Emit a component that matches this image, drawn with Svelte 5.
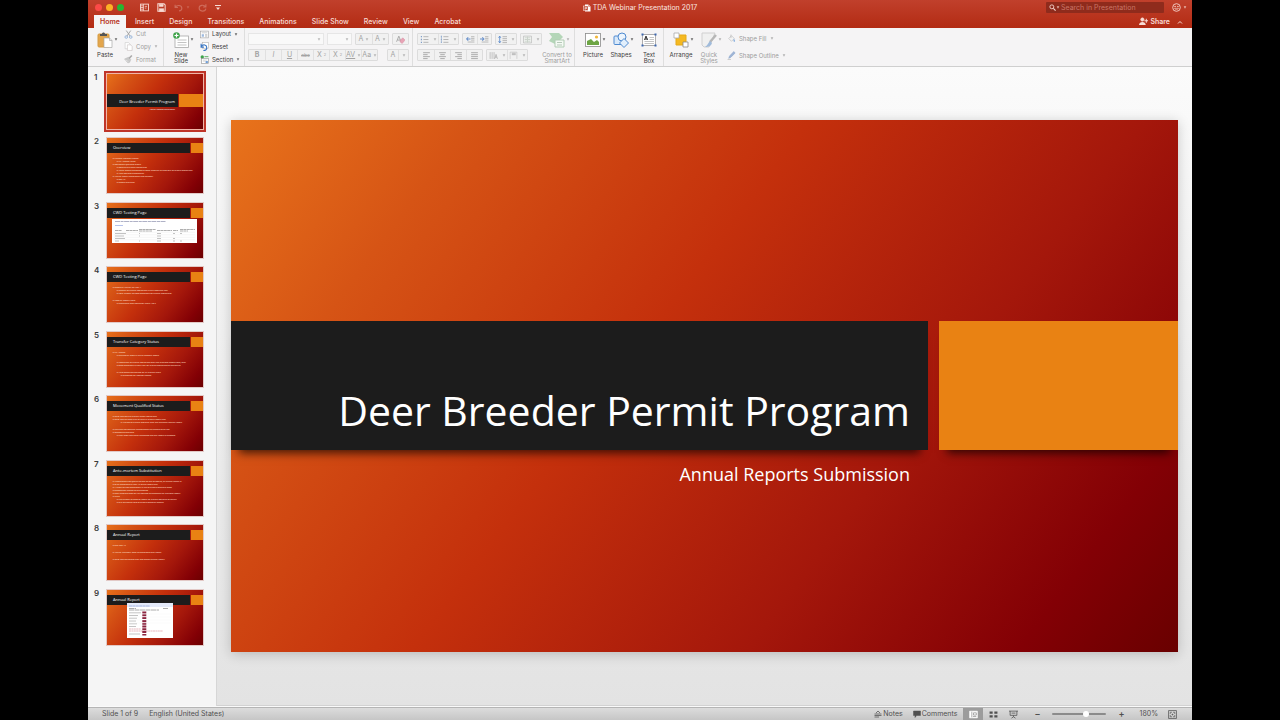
<script lang="ts">
    type Line = { text: string; level?: number; space?: boolean };
    type Thumb = { title: string; lines?: Line[]; picture?: string };

    const tabs = ["Home", "Insert", "Design", "Transitions", "Animations", "Slide Show", "Review", "View", "Acrobat"];

    const slides: Thumb[] = [
        { title: "Deer Breeder Permit Program" },
        {
            title: "Overview",
            lines: [
                { text: "Transfer Category Status" },
                { text: "TC 1 Status Herds", level: 1 },
                { text: "Movement Qualified Status" },
                { text: "Months of eligible mortalities", level: 1 },
                { text: "Antler testing submitted to meet report of at least 80% of eligible mortalities", level: 1 },
                { text: "Ante-mortem Substitution", level: 1 },
                { text: "Annual Report Submission and Renewal" },
                { text: "May 15", level: 1 },
                { text: "Report Overview", level: 1 }
            ]
        },
        { title: "CWD Testing Page", picture: "table" },
        {
            title: "CWD Testing Page",
            lines: [
                { text: "Report by Facility for Year 1" },
                { text: "Number of eligible mortalities in the reporting year", level: 1 },
                { text: "Total number of tests submitted for eligible mortalities", level: 1 },
                { text: "Tests by Report Years", space: true },
                { text: "Cumulative test results for years 1 to 5", level: 1 }
            ]
        },
        {
            title: "Transfer Category Status",
            lines: [
                { text: "TC 1 Status" },
                { text: "Certified or tests in lieu of category status", level: 1 },
                { text: "Tested 80% of eligible mortalities over five previous report years, with", level: 1, space: true },
                { text: "tests submitted in each year for eligible mortalities of the facility", level: 1 },
                { text: "Herd status maintained for all eligible years", level: 1, space: true },
                { text: "Submitted for category status", level: 2 }
            ]
        },
        {
            title: "Movement Qualified Status",
            lines: [
                { text: "Must have 80% of eligible report mortalities" },
                { text: "Must have at least 3.6% of herd in eligible report year" },
                { text: "Average of eligible mortality over the previous years of report", level: 2 },
                { text: "Facilities not meeting a substitution are subject to be not", space: true },
                { text: "movement qualified" },
                { text: "Until tests have been submitted and the report is accepted", level: 1 }
            ]
        },
        {
            title: "Ante-mortem Substitution",
            lines: [
                { text: "If movement Not Qualifying due to lack of testing, an annual report is" },
                { text: "to be submitted by May 15 of the report year" },
                { text: "A report or test submission in lieu of eligible mortality tests" },
                { text: "substitution results to be accepted" },
                { text: "New reported tests will be counted as substitute for previous report" },
                { text: "years" },
                { text: "The number of tests to report for eligible mortality of facility", level: 1 },
                { text: "at a minimum ratio of eligible mortality testing", level: 1 }
            ]
        },
        {
            title: "Annual Report",
            lines: [
                { text: "Due May 15" },
                { text: "Annual inventory must be submitted with report", space: true },
                { text: "Must have permittee sign and submit annual report", space: true }
            ]
        },
        { title: "Annual Report", picture: "form" }
    ];

    let current = $state(0);
    let zoom = $state(64);
</script>

{#snippet caret()}
    <svg class="caret" viewBox="0 0 6 4" aria-hidden="true"><path d="M1 0h4L3 4z" fill="currentColor" /></svg>
{/snippet}

{#snippet icon(name: string)}
    <svg class="icon" viewBox="0 0 16 16" fill="none" stroke="currentColor" aria-hidden="true">
        {#if name === "sidebar"}
            <rect x="1" y="2" width="14" height="12" stroke-width="1.600" /><path d="M6 2v12M1 5h5M1 8h5M1 11h5" stroke-width="1.400" /><path d="M8.500 6h4M8.500 9h3" stroke-width="1.200" />
        {:else if name === "save"}
            <path d="M1.500 1.500h11l2 2v11h-13z" stroke-width="1.800" /><path d="M4 2h7v4H4zM4 10h8v5H4z" fill="currentColor" />
        {:else if name === "undo"}
            <path d="M2 3v5h5M2 8c3-5 11-5 12 1 0 3-2 5-5 5" stroke-width="2" />
        {:else if name === "redo"}
            <path d="M14 2v5H9M13.500 7C10 2 2 4 2 9c0 7 11 7 12 1" stroke-width="2" />
        {:else if name === "doc"}
            <path d="M4 1h7l4 4v10H4z" fill="#fff" stroke="none" /><path d="M11 1v4h4" stroke="#b9402a" /><rect x="1" y="4" width="9" height="9" fill="#b8351f" stroke="#fff" /><path d="M4 11.500V6.500h3v3H4" stroke="#fff" stroke-width="1.300" />
        {:else if name === "search"}
            <circle cx="6.500" cy="6.500" r="4.500" stroke-width="2" /><path d="M10 10l5 5" stroke-width="2.400" />
        {:else if name === "smile"}
            <circle cx="8" cy="8" r="6.800" stroke-width="1.500" /><circle cx="5.500" cy="6.300" r=".8" fill="currentColor" /><circle cx="10.500" cy="6.300" r=".8" fill="currentColor" /><path d="M4.500 9.500c1.500 3 5.500 3 7 0z" />
        {:else if name === "share"}
            <circle cx="6" cy="4.500" r="3" fill="currentColor" /><path d="M0 14c0-7 12-7 12 0z" fill="currentColor" stroke="none" /><path d="M13 3v7M9.500 6.500h6.500" stroke-width="1.800" />
        {:else if name === "paste"}
            <rect x="1" y="2" width="11" height="13" rx="1" fill="#e3a64d" stroke="#d69b43" /><path d="M3 4V2h2c0-2 3-2 3 0h2v2z" fill="#555" stroke="none" /><path d="M7 6h5.500L15 8.500V15.500H7z" fill="#fff" stroke="#aaa" stroke-width=".7" /><path d="M12.500 6v2.500H15" stroke="#aaa" stroke-width=".7" />
        {:else if name === "cut"}
            <path d="M4 1l7 10M12 1L5 11" stroke="#999" stroke-width="1.500" /><circle cx="4" cy="12.500" r="2.300" stroke="#8fb0d8" stroke-width="1.500" /><circle cx="12" cy="12.500" r="2.300" stroke="#8fb0d8" stroke-width="1.500" />
        {:else if name === "copy"}
            <path d="M2 1h6l3 3v8H2z" fill="#fff" stroke="#c4c4c4" /><path d="M6 5h6l2.500 3v7H6z" fill="#fff" stroke="#c4bcbc" />
        {:else if name === "format"}
            <path d="M1 7l6 7 3-1 2-5-4-4z" fill="#c9c9c9" stroke="#bbb" /><path d="M9 6l5-5" stroke="#a8a8a8" stroke-width="2.600" /><path d="M3 9l5 3" stroke="#eee" />
        {:else if name === "newslide"}
            <rect x="2" y="4" width="13.500" height="11.500" fill="#fff" stroke="#a8a8a8" stroke-width=".8" /><path d="M4.500 8h9M4.500 10.500h9M4.500 13h9" stroke="#b4b4b4" stroke-width=".8" /><circle cx="3.500" cy="3.500" r="3.300" fill="#3fa34a" stroke="none" /><path d="M3.500 1.500v4M1.500 3.500h4" stroke="#fff" stroke-width="1.200" />
        {:else if name === "layout"}
            <rect x="1" y="2" width="14" height="12" fill="#fff" stroke="#9a9a9a" /><path d="M3 5h10M9 8h4M9 10h4M9 12h4" stroke="#aaa" /><path d="M3 7.500h4v4.500H3z" fill="#9db9de" stroke="none" />
        {:else if name === "reset"}
            <rect x="4" y="1" width="11" height="10" fill="#fff" stroke="#aaa" /><path d="M2 3v6h5M2 8c4-5 10-3 10 2 0 3-2 5-6 5" stroke="#3875c4" stroke-width="2" />
        {:else if name === "section"}
            <circle cx="4" cy="3.500" r="3" fill="#3fa34a" stroke="none" /><path d="M8 3h7" stroke="#3fa34a" stroke-width="1.500" /><rect x="3" y="6.500" width="12" height="8.500" fill="#fff" stroke="#8a8a8a" /><path d="M5 9h8M5 11h5" stroke="#bbb" /><path d="M10 11h4v3h-4z" fill="#5a8fd0" stroke="none" />
        {:else if name === "clear"}
            <path d="M1 12L5 2l4 10M3 9h5" stroke="#999" stroke-width="1.400" /><path d="M8 9l4-4 4 4-5 6-4-3z" fill="#e8a3b5" stroke="#d893a6" />
        {:else if name === "bullets" || name === "numbers"}
            <path d="M6 3h9M6 8h9M6 13h9" stroke="#a0a0a0" stroke-width="1.300" /><path d="M1.500 3h2M1.500 8h2M1.500 13h2" stroke="#7d9cc7" stroke-width={name === "bullets" ? 2.4 : 1.2} />{#if name === "numbers"}<path d="M2.500 1v13" stroke="#7d9cc7" />{/if}
        {:else if name === "outdent" || name === "indent"}
            <path d="M9 3h6M9 6h6M9 9h6M3 12.500h12" stroke="#a0a0a0" stroke-width="1.200" /><path d={name === "outdent" ? "M8 7H1M4 4L1 7l3 3" : "M0 7h7M4 4l3 3-3 3"} stroke="#6b92cb" stroke-width="1.800" />
        {:else if name === "spacing"}
            <path d="M8 3h8M8 6.500h8M8 10h8M8 13.500h8" stroke="#a0a0a0" stroke-width="1.300" /><path d="M3 2v12M1 5l2-3 2 3M1 11l2 3 2-3" stroke="#5d8bcd" stroke-width="1.500" />
        {:else if name === "columns"}
            <path d="M1 2h14v12H1z" fill="#f5f7f5" stroke="#aaa" /><path d="M3 5h4M3 8h4M3 11h4M9 5h4M9 8h4M9 11h4M8 3v10" stroke="#a9b5aa" />
        {:else if name === "left" || name === "center" || name === "right" || name === "justify"}
            <path d={name === "left" ? "M2 3h12M2 6.500h8M2 10h12M2 13.500h8" : name === "center" ? "M2 3h12M4 6.500h8M2 10h12M4 13.500h8" : name === "right" ? "M2 3h12M6 6.500h8M2 10h12M6 13.500h8" : "M2 3h12M2 6.500h12M2 10h12M2 13.500h12"} stroke="#999" stroke-width="1.400" />
        {:else if name === "direction"}
            <path d="M2 2v12M5.500 2v12M9 2v12" stroke="#aaa" stroke-width="1.200" /><path d="M10 14l2.500-8 2.500 8M11 11h3" stroke="#999" />
        {:else if name === "valign"}
            <path d="M2 14V2h12v12" stroke="#bbb" /><path d="M5 4h7M5 6.500h7" stroke="#999" stroke-width="1.200" />
        {:else if name === "smartart"}
            <path d="M0 1h10l4 4-4 4H6v3L0 9l3-4z" fill="#b4d6b8" stroke="none" /><path d="M6 8h9v7H6z" fill="#f4faf4" stroke="#b2cdb5" /><path d="M8 10.500h5M8 13h5" stroke="#b6c8b8" />
        {:else if name === "picture"}
            <rect x=".5" y="1.500" width="15" height="13" fill="#fff" stroke="#8b8b8b" stroke-width=".8" /><path d="M2 13V9l4-2 3 3 3-2 2 2v3z" fill="#6da544" stroke="none" /><circle cx="11.500" cy="5" r="1.600" fill="#f2b83a" stroke="none" />
        {:else if name === "shapes"}
            <rect x="1" y="4" width="8.500" height="8.500" rx="1" fill="#d9e9fa" stroke="#4f8ad0" /><circle cx="9" cy="5" r="4" fill="#edf5fd" stroke="#4f8ad0" /><path d="M11 6.500l4.500 4.500-4.500 4.500L6.500 11z" fill="#e2effc" stroke="#4f8ad0" />
        {:else if name === "textbox"}
            <path d="M1.500 2.500h13v11h-13z" fill="#fff" stroke="#8c8c8c" stroke-width=".7" /><path d="M3.500 8L5 4l1.500 4M4 7h2.500" stroke="#333" /><path d="M8.500 5.500h4.500M8.500 7.500h4.500M3.500 9.500h9.500M3.500 11.500h9.500" stroke="#aaa" stroke-width=".7" /><path d="M.5 1.500h2v2h-2zM13.500 1.500h2v2h-2zM.5 12.500h2v2h-2zM13.500 12.500h2v2h-2z" fill="#3e68b0" stroke="none" />
        {:else if name === "arrange"}
            <path d="M3 3h10v10H3z" fill="#f5b921" stroke="#e5a919" /><path d="M1 1h5v5H1z" fill="#fff" stroke="#aaa" stroke-width=".8" /><path d="M10 10h5v5h-5z" fill="#fff" stroke="#888" stroke-width=".8" />
        {:else if name === "styles"}
            <path d="M1 1h13L8 15H3l-2-2z" fill="#f0f0f0" stroke="#d0d0d0" /><path d="M15 3L9 10" stroke="#b6b6b6" stroke-width="2.400" /><path d="M9 9l2 2c-1 3-3 4-7 4 3-2 3-4 5-6z" fill="#9fbadb" stroke="none" />
        {:else if name === "fill"}
            <path d="M3 8l5-5 5 5-5 5z" fill="#f3f3f3" stroke="#b5b5b5" /><path d="M7 1v6" stroke="#aaa" /><path d="M12 8c3 3 3 6 1 6s-2-3-1-6z" fill="#8fb3df" stroke="none" />
        {:else if name === "outline"}
            <path d="M3 13l1.500-4L12 1l2.500 2.500L7 11z" fill="#9fb5d6" stroke="#8ba5cb" /><path d="M1 15h6" stroke="#aaa" />
        {:else if name === "notes"}
            <path d="M4 6l4-4 4 4M1 8h14M1 11h14M1 14h9" stroke-width="1.500" />
        {:else if name === "comments"}
            <path d="M1 2h14v9H7l-3 4v-4H1z" fill="currentColor" />
        {:else if name === "normal"}
            <path d="M1 2h14v12H1z" fill="#fff" stroke="#fff" /><path d="M5 3v10M8 5h5v4H8zM7 11.500h6" stroke="#888" stroke-width="1.200" />
        {:else if name === "sorter"}
            <path d="M1 2.500h5.500v4H1zM9.500 2.500H15v4H9.500zM1 9.500h5.500v4H1zM9.500 9.500H15v4H9.500z" fill="currentColor" stroke="none" />
        {:else if name === "show"}
            <path d="M0 2h16M2 2v7.500h12V2M4.500 5.500h7M8 9.500V12M4.500 14.500L8 12l3.500 2.500" stroke-width="1.400" />
        {:else if name === "fit"}
            <path d="M1 1h14v14H1z" stroke-width="1.300" /><path d="M4 7V4h3M9 4h3v3M12 9v3H9M7 12H4V9M6.500 8h3M8 6.500v3" stroke-width="1.200" />
        {/if}
    </svg>
{/snippet}

{#snippet big(name: string, first: string, second: string, arrow: boolean, off: boolean)}
    <button class="big" class:off>
        <span class="big-icon">{@render icon(name)}</span>
        {#if arrow}{@render caret()}{/if}
        <span class="label">{first}{#if second}<br />{second}{/if}</span>
    </button>
{/snippet}

{#snippet small(name: string, text: string, arrow: boolean, off: boolean)}
    <button class="small" class:off>{@render icon(name)}<span>{text}</span>{#if arrow}{@render caret()}{/if}</button>
{/snippet}

{#snippet tool(name: string, arrow: boolean)}
    <button class="tool" class:arrow aria-label={name}>{@render icon(name)}{#if arrow}{@render caret()}{/if}</button>
{/snippet}

<div class="window">
    <header>
        <div class="titlebar">
            <div class="quick">
                <div class="lights">
                    <button class="light close" aria-label="Close"></button>
                    <button class="light minimize" aria-label="Minimize"></button>
                    <button class="light expand" aria-label="Expand"></button>
                </div>
                <button aria-label="Slides">{@render icon("sidebar")}</button>
                <button aria-label="Save">{@render icon("save")}</button>
                <button class="dim" aria-label="Undo">{@render icon("undo")}{@render caret()}</button>
                <button class="dim" aria-label="Redo">{@render icon("redo")}</button>
                <button aria-label="Customize toolbar">
                    <svg class="more" viewBox="0 0 6 6" aria-hidden="true"><path d="M0 0h6v1H0zM1 2.500h4L3 5z" fill="currentColor" /></svg>
                </button>
            </div>
            <div class="title">{@render icon("doc")}<span>TDA Webinar Presentation 2017</span></div>
            <div class="find">
                <label class="search">
                    {@render icon("search")}{@render caret()}
                    <input type="search" placeholder="Search in Presentation" aria-label="Search in Presentation" />
                </label>
                <button class="feedback" aria-label="Feedback">{@render icon("smile")}{@render caret()}</button>
            </div>
        </div>
        <nav class="tabs">
            {#each tabs as tab, i}
                <button class="tab" class:active={i === 0}>{tab}</button>
            {/each}
            <button class="share">{@render icon("share")}Share</button>
            <button class="collapse" aria-label="Collapse ribbon">
                <svg viewBox="0 0 6 4" fill="none" stroke="currentColor"><path d="M1 3.500l2-2 2 2" /></svg>
            </button>
        </nav>
    </header>

    <div class="ribbon">
        <section class="group clipboard">
            {@render big("paste", "Paste", "", true, false)}
            <div class="stack">
                {@render small("cut", "Cut", false, true)}
                {@render small("copy", "Copy", true, true)}
                {@render small("format", "Format", false, true)}
            </div>
        </section>
        <section class="group slide-tools">
            {@render big("newslide", "New", "Slide", true, false)}
            <div class="stack">
                {@render small("layout", "Layout", true, false)}
                {@render small("reset", "Reset", false, false)}
                {@render small("section", "Section", true, false)}
            </div>
        </section>
        <section class="group fonts">
            <div class="rows">
                <div class="row">
                    <div class="combo family"><select aria-label="Font"><option></option></select>{@render caret()}</div>
                    <div class="combo size"><select aria-label="Font size"><option></option></select>{@render caret()}</div>
                    <div class="bar"><button class="tool grow">A{@render caret()}</button><button class="tool grow">A{@render caret()}</button></div>
                    <div class="bar">{@render tool("clear", false)}</div>
                </div>
                <div class="row">
                    <div class="bar wide">
                        <button class="tool"><b>B</b></button>
                        <button class="tool"><i>I</i></button>
                        <button class="tool"><u>U</u></button>
                        <button class="tool strike"><s>abc</s></button>
                        <button class="tool">X<sup>2</sup></button>
                        <button class="tool">X<sub>2</sub></button>
                        <button class="tool"><u>AV</u>{@render caret()}</button>
                        <button class="tool">Aa{@render caret()}</button>
                    </div>
                    <div class="bar color"><button class="tool">A</button><button class="tool" aria-label="Font color">{@render caret()}</button></div>
                </div>
            </div>
        </section>
        <section class="group paragraph">
            <div class="rows">
                <div class="row">
                    <div class="bar">{@render tool("bullets", true)}{@render tool("numbers", true)}</div>
                    <div class="bar">{@render tool("outdent", false)}{@render tool("indent", false)}</div>
                    <div class="bar">{@render tool("spacing", true)}</div>
                    <div class="bar">{@render tool("columns", true)}</div>
                </div>
                <div class="row">
                    <div class="bar aligns">{@render tool("left", false)}{@render tool("center", false)}{@render tool("right", false)}{@render tool("justify", false)}</div>
                    <div class="bar">{@render tool("direction", true)}{@render tool("valign", true)}</div>
                </div>
            </div>
            {@render big("smartart", "Convert to", "SmartArt", true, true)}
        </section>
        <section class="group insert">
            {@render big("picture", "Picture", "", true, false)}
            {@render big("shapes", "Shapes", "", true, false)}
            {@render big("textbox", "Text", "Box", false, false)}
        </section>
        <section class="group drawing">
            {@render big("arrange", "Arrange", "", true, false)}
            {@render big("styles", "Quick", "Styles", true, true)}
            <div class="stack two">
                {@render small("fill", "Shape Fill", true, true)}
                {@render small("outline", "Shape Outline", true, true)}
            </div>
        </section>
    </div>

    <main>
        <ol class="pane">
            {#each slides as slide, i}
                <li>
                    <span class="number">{i + 1}</span>
                    <button class="thumb" class:selected={i === current} class:cover={i === 0} onclick={() => (current = i)}>
                        <span class="thumb-title">{slide.title}</span>
                        <span class="thumb-accent"></span>
                        {#if i === 0}
                            <span class="thumb-sub">Annual Reports Submission</span>
                        {/if}
                        {#if slide.lines}
                            <span class="thumb-body">
                                {#each slide.lines as line}
                                    <span class="line level{line.level ?? 0}" class:space={line.space}>▸ {line.text}</span>
                                {/each}
                            </span>
                        {/if}
                        {#if slide.picture === "table"}
                            <svg class="shot table" viewBox="0 0 85 24" aria-hidden="true">
                                <path fill="#fff" d="M0 0h85v24H0z" />
                                <path d="M3 2.500h51" stroke="#9a9db8" stroke-width=".8" stroke-dasharray="5 .6 3 .5" />
                                <path d="M3 6.500h8" stroke="#a3b3e6" stroke-width=".8" />
                                <path d="M3 11.500h7M14 11.500h12M27 10.500h17M27 12h13M45 11.500h15M61 11.500h5M68 10.500h15M68 12h8" stroke="#8c8c8c" stroke-width=".7" stroke-dasharray="3 .4" />
                                <path d="M3 14.500h11M3 17h9M3 19.500h10M3 22h4M27 14.500h1M27 17h1M27 22h1M45 14.500h4M45 17h4M45 19.500h4M45 22h4M61 14.500h2M61 19.500h2M61 22h2M68 14.500h2M68 22h2" stroke="#a8a8a8" stroke-width=".7" />
                                <path d="M2 13.200h81M2 15.800h81M2 18.300h81M2 20.800h81" stroke="#ddd" stroke-width=".3" />
                            </svg>
                        {/if}
                        {#if slide.picture === "form"}
                            <svg class="shot form" viewBox="0 0 46 35" aria-hidden="true">
                                <path fill="#fff" d="M0 0h46v35H0z" />
                                <path fill="#e4eafa" d="M0 0h46v4H0z" />
                                <path d="M2 3h21" stroke="#a9b8e0" stroke-dasharray="3 .4" />
                                <path d="M2 5.500h7M36 5.500h5M2 7h30" stroke="#888" stroke-width=".7" stroke-dasharray="5 .5" />
                                <path d="M2 9.800h12M2 12.500h9M2 15.200h8M2 18h7M2 20.800h8M2 23.500h7M2 31h11" stroke="#b5b5b5" stroke-width=".8" />
                                <path d="M2 26h12M2 28h34" stroke="#d78c96" stroke-width=".6" stroke-dasharray="2 .4" />
                                <path d="M17.300 8.500v24" stroke="#8c2540" stroke-width="4" stroke-dasharray="2 .8" />
                                <path d="M2 11h42M2 14h42M2 17h42M2 20h42" stroke="#eee" stroke-width=".3" />
                            </svg>
                        {/if}
                    </button>
                </li>
            {/each}
        </ol>

        <div class="stage">
            <article class="slide">
                <h1>Deer Breeder Permit Program</h1>
                <div class="accent"></div>
                <p>Annual Reports Submission</p>
            </article>
        </div>
    </main>

    <footer>
        <span class="count">Slide 1 of 9</span>
        <span class="language">English (United States)</span>
        <button class="text">{@render icon("notes")}Notes</button>
        <button class="text">{@render icon("comments")}Comments</button>
        <div class="views">
            <button class="active" aria-label="Normal view">{@render icon("normal")}</button>
            <button aria-label="Slide sorter">{@render icon("sorter")}</button>
            <button aria-label="Slide show">{@render icon("show")}</button>
        </div>
        <div class="zoom">
            <button aria-label="Zoom out">−</button>
            <input type="range" min="0" max="100" bind:value={zoom} aria-label="Zoom" />
            <button aria-label="Zoom in">+</button>
        </div>
        <span class="percent">180%</span>
        <button aria-label="Fit to window">{@render icon("fit")}</button>
    </footer>
</div>

<style>
    :global(body) {
        background-color: #000;
    }

    .window {
        height: 100vh;
        margin: 0 88px;
        display: flex;
        flex-direction: column;
        overflow: hidden;
        background-color: #f5f5f5;
        color: #3b3b3b;
        font-family: Inter, "Liberation Sans", sans-serif;
        font-size: 7px;
        line-height: 8px;
    }

    button,
    input,
    select {
        font: inherit;
        color: inherit;
        background: none;
        border: 0;
        padding: 0;
        margin: 0;
    }

    button {
        display: flex;
        align-items: center;
    }

    .icon {
        width: 9px;
        height: 9px;
        flex: none;
        display: block;
    }

    .caret {
        width: 4px;
        height: 3px;
        flex: none;
        opacity: 0.75;
    }

    header {
        height: 28px;
        flex: none;
        background: linear-gradient(#c1402c, #b32b13);
        color: #f8dcd5;
    }

    .titlebar {
        height: 15px;
        display: grid;
        grid-template-columns: 1fr auto 1fr;
        align-items: center;
    }

    .quick {
        display: flex;
        align-items: center;
        gap: 8px;
        padding-left: 7px;
    }

    .more {
        width: 6px;
        height: 6px;
    }

    .lights {
        display: flex;
        gap: 4px;
        margin-right: 8px;
    }

    .light {
        width: 7px;
        height: 7px;
        border-radius: 50%;
    }

    .close {
        background-color: #fb4a48;
    }

    .minimize {
        background-color: #fdb125;
    }

    .expand {
        background-color: #27b732;
    }

    .dim {
        opacity: 0.3;
        gap: 3px;
    }

    .title {
        display: flex;
        align-items: center;
        gap: 2px;
        color: #fbe6e0;
    }

    .title .icon {
        width: 8px;
        height: 8px;
    }

    .find {
        display: flex;
        justify-content: flex-end;
        align-items: center;
        gap: 8px;
        padding-right: 5px;
    }

    .search {
        width: 115px;
        height: 11px;
        display: flex;
        align-items: center;
        padding-left: 3px;
        border-radius: 1px;
        background-color: #8f2b1c;
    }

    .search .icon {
        width: 7px;
        height: 7px;
    }

    .search input {
        flex: 1;
        min-width: 0;
        margin-left: 1px;
        outline: none;
        appearance: none;
    }

    .search input::placeholder {
        color: #c97566;
        opacity: 1;
    }

    .feedback {
        gap: 2px;
    }

    .tabs {
        height: 13px;
        display: flex;
        padding: 0 9px 0 6px;
    }

    .tab {
        padding: 0 7px;
        margin-right: 1px;
        font-weight: 500;
    }

    .tab.active {
        padding: 0 6px;
        margin-right: 2px;
        background-color: #f5f4f5;
        color: #b8341e;
        font-weight: 600;
    }

    .share {
        margin-left: auto;
        gap: 2px;
        font-weight: 600;
    }

    .collapse {
        margin-left: 7px;
    }

    .collapse svg {
        width: 6px;
        height: 4px;
    }

    .ribbon {
        height: 38px;
        flex: none;
        display: flex;
        background-color: #f5f4f5;
        border-bottom: 1px solid #cfcfcf;
        font-size: 6px;
        line-height: 6px;
    }

    .group {
        display: flex;
        border-right: 1px solid #dedede;
        padding: 0 3px;
    }

    .group.drawing {
        border-right: 0;
    }

    .clipboard,
    .slide-tools {
        gap: 5px;
    }

    .insert {
        padding: 0 0 0 4px;
    }

    .big {
        display: grid;
        grid-template: 17px auto / 5px 18px 5px;
        align-content: start;
        row-gap: 4px;
        padding-top: 3px;
    }

    .big-icon {
        grid-column: 2;
        display: flex;
        justify-content: center;
    }

    .big-icon .icon {
        width: 16px;
        height: 16px;
    }

    .big .caret {
        grid-column: 3;
        align-self: center;
    }

    .label {
        grid-column: 1 / -1;
        justify-self: center;
        white-space: nowrap;
        text-align: center;
    }

    .off {
        color: #9c9c9c;
    }

    .stack {
        display: grid;
        grid-template-rows: repeat(3, 1fr);
        min-width: 36px;
    }

    .slide-tools .stack {
        width: 41px;
    }

    .stack.two {
        grid-template-rows: 17px 17px;
        align-content: center;
        margin-left: 4px;
    }

    .small {
        gap: 3px;
        white-space: nowrap;
    }

    .rows {
        display: flex;
        flex-direction: column;
        gap: 4px;
        padding-top: 5px;
    }

    .row {
        height: 12px;
        display: flex;
        gap: 3px;
        color: #a3a3a3;
    }

    .combo {
        display: flex;
        align-items: center;
        border: 1px solid #e6e6e6;
        background-color: #f9f9f9;
        padding-right: 2px;
    }

    .combo select {
        flex: 1;
        min-width: 0;
        appearance: none;
    }

    .family {
        width: 74px;
    }

    .size {
        width: 22px;
    }

    .bar {
        display: flex;
        border: 1px solid #dcdcdc;
        border-radius: 1px;
        background-color: #f1f1f1;
    }

    .tool {
        min-width: 15px;
        justify-content: center;
        gap: 2px;
        font-size: 7px;
    }

    .tool + .tool {
        border-left: 1px solid #e0e0e0;
    }

    .wide .tool,
    .grow {
        min-width: 16px;
    }

    .strike {
        font-size: 5px;
    }

    .tool sup,
    .tool sub {
        font-size: 4px;
    }

    .color .tool {
        min-width: 10px;
    }

    .fonts .rows {
        width: 161px;
    }

    .fonts .row {
        justify-content: space-between;
    }

    .paragraph .rows {
        width: 125px;
        padding-left: 1px;
    }

    .paragraph .big {
        margin-left: 1px;
    }

    .paragraph .tool {
        min-width: 14px;
    }

    .paragraph .arrow {
        min-width: 20px;
        gap: 4px;
    }

    .paragraph .aligns .tool {
        min-width: 16px;
    }

    main {
        flex: 1;
        min-height: 0;
        display: flex;
        border-bottom: 1px solid #fafafa;
    }

    .pane {
        width: 122px;
        flex: none;
        margin: 0;
        padding: 6px 0 0 6px;
        list-style: none;
        overflow: hidden;
        display: grid;
        grid-auto-rows: 64px 65px;
        background-color: #f5f5f5;
        border-right: 1px solid #d6d6d6;
    }

    .pane li {
        display: grid;
        grid-template-columns: 12px 98px;
        align-items: start;
    }

    .number {
        font-size: 8px;
        font-weight: 600;
    }

    .thumb,
    .slide {
        background: linear-gradient(127deg, #e8731b, #d65415 18%, #c4300c 43%, #a4170b 68%, #830005 88%, #690000);
    }

    .thumb {
        position: relative;
        height: 57px;
        display: grid;
        grid-template: 10px 1fr / 83px 1fr;
        column-gap: 1px;
        align-items: stretch;
        padding-top: 5px;
        border: 1px solid #e2c9c6;
        background-origin: border-box;
        color: #fff;
        font-family: "Open Sans", sans-serif;
        text-align: left;
    }

    .thumb.selected {
        border-color: #f0b5a8;
        outline: 2px solid #bf3529;
    }

    .thumb-title {
        padding-left: 6px;
        background-color: #1c1c1c;
        font-size: 4px;
        line-height: 10px;
        white-space: nowrap;
        font-family: "Liberation Sans Narrow", "Open Sans", sans-serif;
    }

    .thumb-accent {
        background-color: #e98213;
    }

    .cover {
        grid-template: 13px 1fr / 71px 1fr;
        padding-top: 20px;
    }

    .cover .thumb-title {
        padding: 3px 3px 0 0;
        text-align: right;
        font-family: "Open Sans", sans-serif;
    }

    .thumb-sub {
        padding-right: 3px;
        text-align: right;
        font-size: 2px;
        line-height: 6px;
    }

    .thumb-body {
        grid-column: 1 / -1;
        display: flex;
        flex-direction: column;
        padding: 4px 6px 0;
        font-size: 2px;
        font-weight: 600;
        line-height: 3px;
        color: #fbd9c0;
        white-space: nowrap;
    }

    .level1 {
        padding-left: 4px;
    }

    .level2 {
        padding-left: 8px;
    }

    .space {
        padding-top: 4px;
    }

    .shot {
        position: absolute;
    }

    .table {
        width: 85px;
        height: 24px;
        left: 5px;
        top: 16px;
    }

    .form {
        width: 46px;
        height: 35px;
        left: 20px;
        top: 13px;
    }

    .stage {
        flex: 1;
        display: flex;
        align-items: center;
        padding: 0 14px;
        background: linear-gradient(#fbfbfb, #e3e3e3);
        border-bottom: 1px solid #d2d2d2;
    }

    .slide {
        flex: 1;
        aspect-ratio: 16 / 9;
        display: grid;
        grid-template: 201fr 130fr 202fr / 697fr 239fr;
        column-gap: 11px;
        box-shadow: 0 2px 12px rgba(0, 0, 0, 0.2);
        color: #fff;
        font-family: "Open Sans", sans-serif;
    }

    .slide h1 {
        grid-row: 2;
        display: flex;
        align-items: flex-end;
        justify-content: flex-end;
        margin: 0;
        padding: 0 18px 12px 0;
        background-color: #1c1c1c;
        box-shadow: 0 11px 9px -8px rgba(0, 0, 0, 0.7);
        font-size: 41px;
        font-weight: 400;
        line-height: 56px;
        white-space: nowrap;
    }

    .accent {
        grid-row: 2;
        background-color: #e98213;
        box-shadow: 0 11px 9px -8px rgba(0, 0, 0, 0.7);
    }

    .slide p {
        grid-row: 3;
        margin: 0;
        padding: 10px 18px 0 0;
        text-align: right;
        font-size: 18px;
        font-weight: 500;
        line-height: 28px;
    }

    footer {
        height: 13px;
        flex: none;
        box-sizing: border-box;
        display: flex;
        align-items: center;
        padding: 0 15px 0 14px;
        background: linear-gradient(#dcdcdc, #c6c6c6);
        border-top: 1px solid #b5b5b5;
        color: #505050;
    }

    .language {
        margin-left: 11px;
        margin-right: auto;
    }

    .text {
        gap: 1px;
        margin-right: 10px;
    }

    .text .icon {
        width: 8px;
        height: 8px;
    }

    .views {
        align-self: stretch;
        display: flex;
        margin-left: -4px;
    }

    .views button {
        width: 20px;
        justify-content: center;
    }

    .views .active {
        background-color: #9c9c9c;
    }

    .zoom {
        display: flex;
        align-items: center;
        gap: 12px;
        margin-left: 11px;
    }

    .zoom button {
        font-size: 9px;
        font-weight: 600;
    }

    .zoom input {
        width: 54px;
        height: 8px;
        appearance: none;
    }

    .zoom input::-webkit-slider-runnable-track {
        height: 2px;
        border-radius: 1px;
        background-color: #8b8b8b;
    }

    .zoom input::-webkit-slider-thumb {
        appearance: none;
        width: 6px;
        height: 6px;
        margin-top: -2px;
        border-radius: 50%;
        background-color: #fff;
    }

    .percent {
        margin: 0 10px 0 15px;
    }
</style>
